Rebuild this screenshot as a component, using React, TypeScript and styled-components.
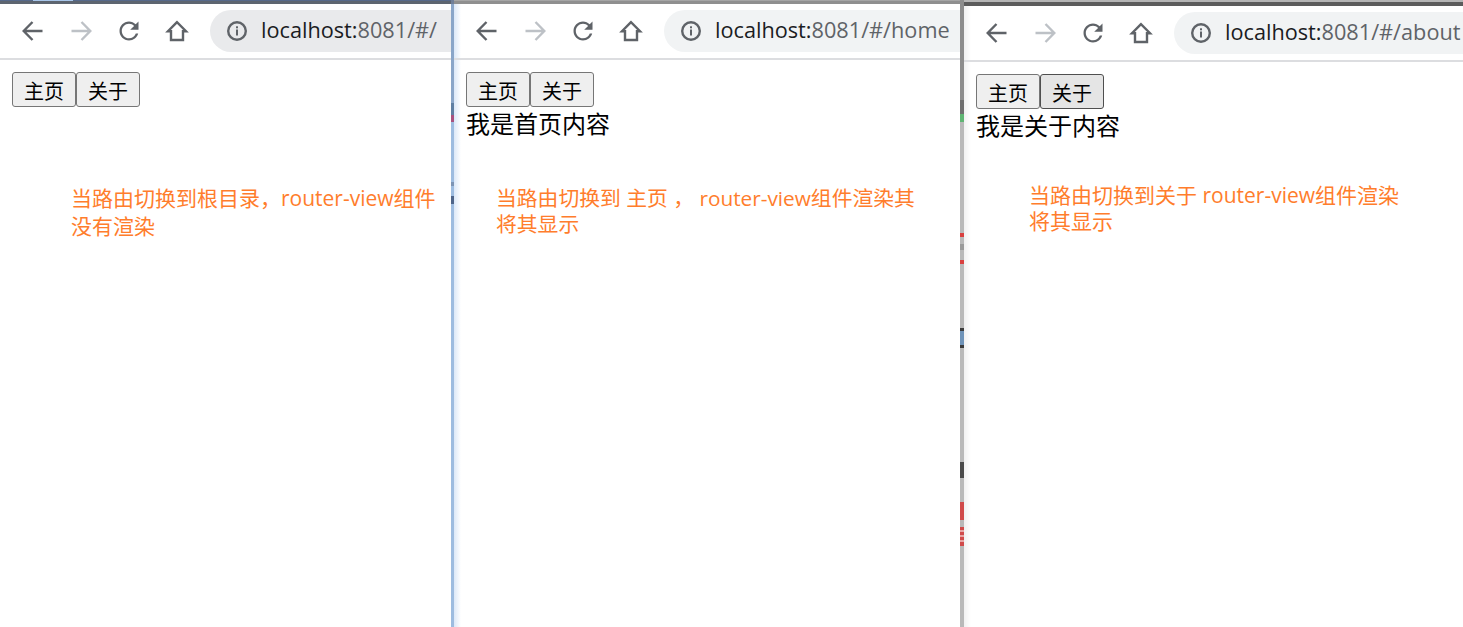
import React from "react";
import styled, { createGlobalStyle } from "styled-components";

const CJK = `"Noto Sans CJK SC", "Liberation Sans", sans-serif`;

const GlobalStyle = createGlobalStyle`
  html, body {
    margin: 0;
    padding: 0;
    background: #fff;
  }
  * {
    box-sizing: border-box;
  }
`;

const Screen = styled.div`
  display: flex;
  width: 1463px;
  height: 627px;
  overflow: hidden;
  font-family: ${CJK};
  color: #000;
`;

const Pane = styled.section<{ $width: number; $shade?: string }>`
  flex: 0 0 ${p => p.$width}px;
  width: ${p => p.$width}px;
  overflow: hidden;
  background: ${p =>
    p.$shade
      ? `linear-gradient(to right, ${p.$shade}, #fff 7px) no-repeat`
      : "#fff"};
`;

const TopEdge = styled.div<{ $height: number; $paint: string }>`
  height: ${p => p.$height}px;
  background: ${p => p.$paint};
`;

const Toolbar = styled.div`
  display: flex;
  align-items: flex-start;
  height: 56px;
  padding: 6px 0 0 9px;
  border-bottom: 2px solid #dcdde0;
`;

const NavButton = styled.div`
  display: flex;
  flex: 0 0 48px;
  align-items: center;
  justify-content: center;
  height: 42px;
`;

const Address = styled.div<{ $fill: string }>`
  display: flex;
  flex: 1;
  align-items: center;
  height: 42px;
  margin-left: 9px;
  padding-left: 16px;
  border-radius: 21px 0 0 21px;
  background: ${p => p.$fill};
  white-space: nowrap;
  font-family: "Open Sans", "Noto Sans", sans-serif;
  font-size: 21.7px;
  line-height: 40px;
  color: #5f6368;
`;

const UrlText = styled.span`
  margin-top: -2px;
`;

const Host = styled.span`
  margin-left: 13px;
  color: #1b1c1f;
`;

const Body = styled.div`
  padding: 12px 0 0 12px;
`;

const Tabs = styled.div`
  display: flex;
`;

const TabButton = styled.button<{ $pressed?: boolean }>`
  width: 64px;
  height: 35px;
  padding: 2px 0 0;
  border: 1px solid ${p => (p.$pressed ? "#4f4f4f" : "#767676")};
  border-radius: 3px;
  background: ${p => (p.$pressed ? "#e5e5e5" : "#efefef")};
  font-family: ${CJK};
  font-size: 20px;
  line-height: 31px;
  color: #000;
`;

const Content = styled.div`
  height: 34px;
  font-size: 24px;
  line-height: 32px;
`;

const Note = styled.div<{ $left: number; $top: number; $leading: number; $size: number }>`
  margin: ${p => p.$top}px 0 0 ${p => p.$left}px;
  font-family: "Open Sans", ${CJK};
  font-size: ${p => p.$size}px;
  line-height: ${p => p.$leading}px;
  white-space: nowrap;
  color: #ff7d2c;
`;

const NoteLine = styled.div``;

const Divider = styled.div<{ $width: number; $paint: string }>`
  flex: 0 0 ${p => p.$width}px;
  background: ${p => p.$paint};
`;

const firstDivider = `linear-gradient(
  to bottom,
  #6f7f99 0 4px,
  #8aa6c9 4px 103px,
  #5f7fa3 103px 115px,
  #a8517f 115px 122px,
  #9dbce0 122px 182px,
  #7d94b4 182px 186px,
  #9dbce0 186px 196px,
  #4d6489 196px 204px,
  #9dbce0 204px 627px
)`;

const secondDivider = `linear-gradient(
  to bottom,
  #8d8d8d 0 100px,
  #6f6f6f 100px 114px,
  #5fb573 114px 122px,
  #b9b9b9 122px 233px,
  #d9403f 233px 237px,
  #b9b9b9 237px 244px,
  #9a9a9a 244px 250px,
  #b9b9b9 250px 260px,
  #d9403f 260px 264px,
  #b9b9b9 264px 328px,
  #3c3c3c 328px 331px,
  #6f93b8 331px 345px,
  #3c3c3c 345px 348px,
  #b9b9b9 348px 462px,
  #4a4a4a 462px 478px,
  #b9b9b9 478px 502px,
  #d04a4a 502px 520px,
  #b9b9b9 520px 527px,
  #d04a4a 527px 530px,
  #e6a5a5 530px 532px,
  #d04a4a 532px 535px,
  #e6a5a5 535px 537px,
  #d04a4a 537px 540px,
  #e6a5a5 540px 542px,
  #d04a4a 542px 546px,
  #b9b9b9 546px 627px
)`;

const firstEdge = `linear-gradient(to right, #56698a 0 33px, #a8c6ea 33px 73px, #56698a 73px) top / 100% 1px no-repeat, #5d6570`;
const secondEdge = `linear-gradient(to bottom, #a5a5a5 0 1px, #8f8f8f 1px)`;
const thirdEdge = `linear-gradient(to bottom, #b5b5b5 0 2px, #5c5c5c 2px)`;

const BackIcon: React.FC<{ color: string }> = ({ color }) => (
  <svg width="24" height="24" viewBox="0 0 24 24" fill="none" stroke={color} strokeWidth="2.400">
    <path d="M21.500 12H3.500M11.500 3L2.700 12l8.800 9" />
  </svg>
);

const ForwardIcon: React.FC<{ color: string }> = ({ color }) => (
  <svg width="24" height="24" viewBox="0 0 24 24" fill="none" stroke={color} strokeWidth="2.400">
    <path d="M2.500 12h18M12.500 3l8.800 9-8.800 9" />
  </svg>
);

const ReloadIcon = () => (
  <svg width="24" height="24" viewBox="0 0 24 24" fill="#5f6368">
    <path d="M18.700 5.300C16.900 3.600 14.600 2.500 12 2.500 6.700 2.500 2.500 6.800 2.500 12s4.200 9.500 9.500 9.500c4.400 0 8.100-3 9.200-7h-2.400c-1 2.800-3.700 4.800-6.800 4.800-4 0-7.200-3.300-7.200-7.300S8 4.700 12 4.700c2 0 3.800.8 5.100 2.200L13.200 10.800H21.500V2.500l-2.800 2.800z" />
  </svg>
);

const HomeIcon = () => (
  <svg width="24" height="24" viewBox="0 0 24 24" fill="none" stroke="#5f6368" strokeWidth="2.400">
    <path d="M12 3.200L3 12.200H6V21h12v-8.800h3L12 3.200z" strokeLinejoin="miter" />
  </svg>
);

const InfoIcon = () => (
  <svg width="22" height="22" viewBox="0 0 22 22" fill="#5f6368">
    <path
      fillRule="evenodd"
      d="M11 1a10 10 0 1 0 0 20 10 10 0 0 0 0-20zm0 2.400a7.600 7.600 0 1 1 0 15.200 7.600 7.600 0 0 1 0-15.200z"
    />
    <rect x="10" y="9.500" width="2" height="6" />
    <rect x="10" y="6.300" width="2" height="2" />
  </svg>
);

interface BrowserPaneProps {
  width: number;
  shade?: string;
  edgeHeight: number;
  edgePaint: string;
  fill: string;
  path: string;
  pressed?: boolean;
  content?: string;
  noteLeft: number;
  noteTop: number;
  noteLeading: number;
  noteSize: number;
  note: string[];
}

const BrowserPane: React.FC<BrowserPaneProps> = ({
  width,
  shade,
  edgeHeight,
  edgePaint,
  fill,
  path,
  pressed,
  content,
  noteLeft,
  noteTop,
  noteLeading,
  noteSize,
  note
}) => (
  <Pane $width={width} $shade={shade}>
    <TopEdge $height={edgeHeight} $paint={edgePaint} />
    <Toolbar>
      <NavButton>
        <BackIcon color="#5f6368" />
      </NavButton>
      <NavButton>
        <ForwardIcon color="#bdc1c6" />
      </NavButton>
      <NavButton>
        <ReloadIcon />
      </NavButton>
      <NavButton>
        <HomeIcon />
      </NavButton>
      <Address $fill={fill}>
        <InfoIcon />
        <UrlText>
          <Host>localhost:</Host>
          {path}
        </UrlText>
      </Address>
    </Toolbar>
    <Body>
      <Tabs>
        <TabButton>主页</TabButton>
        <TabButton $pressed={pressed}>关于</TabButton>
      </Tabs>
      {content && <Content>{content}</Content>}
      <Note $left={noteLeft} $top={noteTop} $leading={noteLeading} $size={noteSize}>
        {note.map(line => (
          <NoteLine key={line}>{line}</NoteLine>
        ))}
      </Note>
    </Body>
  </Pane>
);

const App: React.FC = () => (
  <Screen>
    <GlobalStyle />
    <BrowserPane
      width={451}
      edgeHeight={4}
      edgePaint={firstEdge}
      fill="#e9eaec"
      path="8081/#/"
      noteLeft={59}
      noteTop={77}
      noteLeading={28}
      noteSize={21}
      note={["当路由切换到根目录，router-view组件", "没有渲染"]}
    />
    <Divider $width={3} $paint={firstDivider} />
    <BrowserPane
      width={506}
      shade="#dbe8f8"
      edgeHeight={4}
      edgePaint={secondEdge}
      fill="#f1f3f4"
      path="8081/#/home"
      content="我是首页内容"
      noteLeft={30}
      noteTop={44}
      noteLeading={26}
      noteSize={20.8}
      note={["当路由切换到 主页 ， router-view组件渲染其", "将其显示"]}
    />
    <Divider $width={4} $paint={secondDivider} />
    <BrowserPane
      width={499}
      shade="#f1f1f1"
      edgeHeight={6}
      edgePaint={thirdEdge}
      fill="#f1f3f4"
      path="8081/#/about"
      pressed
      content="我是关于内容"
      noteLeft={53}
      noteTop={39}
      noteLeading={26}
      noteSize={21}
      note={["当路由切换到关于 router-view组件渲染", "将其显示"]}
    />
  </Screen>
);

export default App;
